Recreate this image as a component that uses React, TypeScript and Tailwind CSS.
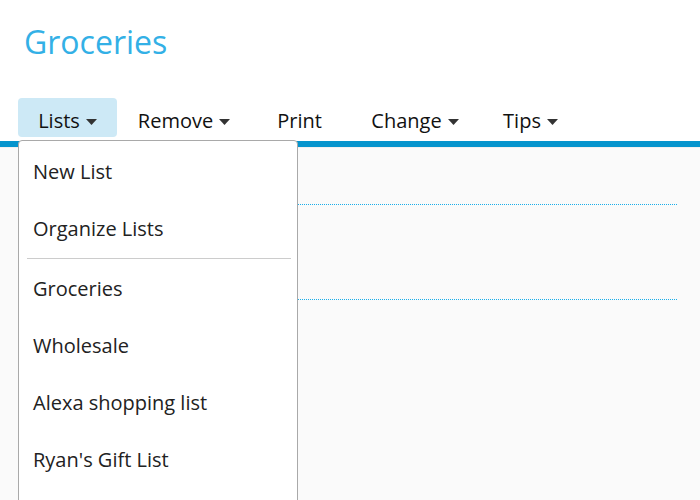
import React from "react";

function Caret() {
  return (
    <svg width="11" height="6" viewBox="0 0 11 6" className="ml-[6px] mt-[2px]">
      <path d="M0 0 L11 0 L5.5 6 Z" fill="#333" />
    </svg>
  );
}

export default function App() {
  const tabs: { label: string; caret: boolean; active?: boolean }[] = [
    { label: "Lists", caret: true, active: true },
    { label: "Remove", caret: true },
    { label: "Print", caret: false },
    { label: "Change", caret: true },
    { label: "Tips", caret: true },
  ];
  const items1 = ["New List", "Organize Lists"];
  const items2 = ["Groceries", "Wholesale", "Alexa shopping list", "Ryan's Gift List"];
  return (
    <div
      className="relative w-[700px] h-[500px] overflow-hidden bg-white flex flex-col"
      style={{ fontFamily: '"Open Sans", "Liberation Sans", sans-serif' }}
    >
      <div className="pt-[22px] pl-[24px] h-[98px]">
        <h1 className="text-[32px] leading-[40px] text-[#33b0e6] font-normal">Groceries</h1>
      </div>
      <div className="flex pl-[18px] gap-[16.5px] h-[39px]">
        {tabs.map((t, i) => (
          <div
            key={t.label}
            className={
              "w-[99px] h-[39px] rounded-[4px] flex items-center justify-center pt-[6px] text-[20px] text-[#111] " +
              (t.active ? "bg-[#cde9f6]" : "") +
              (i === 0 ? "" : " pl-[2px]")
            }
          >
            <span>{t.label}</span>
            {t.caret && <Caret />}
          </div>
        ))}
      </div>
      <div className="h-[4px]" />
      <div className="h-[6px] bg-[#0594cd]" />
      <div className="h-[1px] bg-[#f0f0f0]" />
      <div className="flex-1 bg-[#fafafa] pt-[56px] pl-[19px] pr-[23px]">
        <div className="border-t border-dotted border-[#1aaeea]" />
        <div className="h-[94px]" />
        <div className="border-t border-dotted border-[#1aaeea]" />
      </div>
      <div className="absolute left-[18px] top-[140px] w-[280px] h-[380px] bg-white border border-[#a9a9a9] rounded-t-[4px] pt-[2px]">
        {items1.map((s) => (
          <div key={s} className="h-[57px] flex items-center pl-[14px] text-[20px] text-[#222]">
            {s}
          </div>
        ))}
        <div className="h-[1px] bg-[#cccccc] ml-[8px] mr-[6px] mt-[1px] mb-[1px]" />
        {items2.map((s) => (
          <div key={s} className="h-[57px] flex items-center pl-[14px] text-[20px] text-[#222]">
            {s}
          </div>
        ))}
      </div>
    </div>
  );
}
